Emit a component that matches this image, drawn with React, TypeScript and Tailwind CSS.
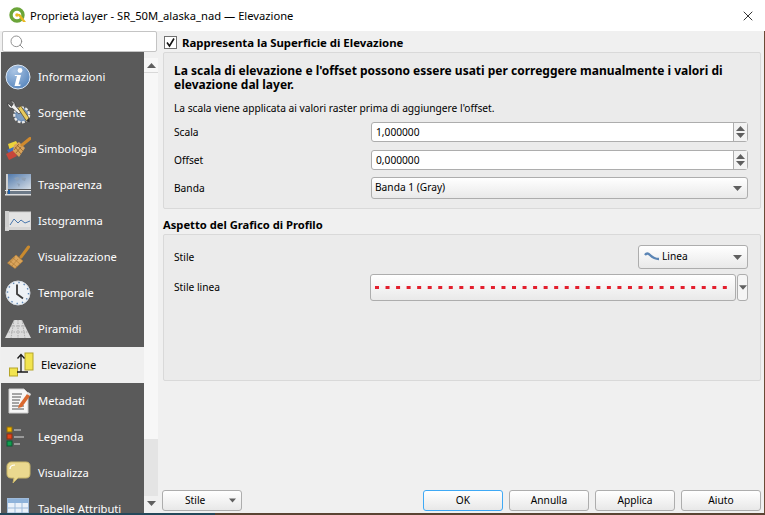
import { ReactNode } from "react";
import { Search, X } from "lucide-react";

const Caret = ({ className = "" }: { className?: string }) => (
  <svg width="9" height="5" viewBox="0 0 9 5" className={className}>
    <path d="M0 0h9L4.5 5z" fill="#5f5f5f" />
  </svg>
);

const InfoIcon = () => (
  <svg width="26" height="26" viewBox="0 0 26 26">
    <defs>
      <radialGradient id="inf" cx="0.35" cy="0.25" r="0.9">
        <stop offset="0" stopColor="#a9c4e4" />
        <stop offset="1" stopColor="#4f7fb8" />
      </radialGradient>
    </defs>
    <circle cx="13" cy="13" r="12" fill="url(#inf)" stroke="#dbe6f3" />
    <circle cx="15" cy="6.5" r="2.4" fill="#fff" />
    <path d="M10 11h6l-2.5 9.5h2.2l-.5 1.5H9.5l2.5-10H9.6z" fill="#fff" />
  </svg>
);

const SourceIcon = () => (
  <svg width="28" height="28" viewBox="0 0 28 28">
    <circle cx="18" cy="16" r="8" fill="#6f8fb5" stroke="#e8e8e8" strokeWidth="2.4" strokeDasharray="3 1.6" />
    <circle cx="18" cy="16" r="5.5" fill="#7d9cc0" />
    <path d="M3 3c0 4 2 6 5 6l7 6 2-2-6-7c0-3-2-5-5-5l3 3-2 3z" fill="#f0f0f0" stroke="#2a2a2a" strokeWidth=".7" />
    <path d="M14 9l3-2.5 9 13-3 3z" fill="#e6c95e" stroke="#5a4a20" strokeWidth=".8" />
    <path d="M23 22.5l3-3 .5 4.5z" fill="#333" />
  </svg>
);

const SymbologyIcon = () => (
  <svg width="26" height="24" viewBox="0 0 26 24">
    <path d="M3 7l8-3 3 5-9 5z" fill="#ecd33a" />
    <path d="M2 13l11-5 2 5-10 5z" fill="#3f6fc0" />
    <path d="M1 17l8-4 3 6-8 4z" fill="#c8463a" />
    <path d="M9 8l5-3 6 6-6 9-6-6z" fill="#d9a35b" />
    <path d="M17 8l8-6.5" stroke="#d08a2e" strokeWidth="3" strokeLinecap="round" />
    <path d="M10 10l6 7M12 8l6 6M9 13l5-6M11 16l5-6" stroke="#8a5c25" strokeWidth=".7" />
  </svg>
);

const TransparencyIcon = () => (
  <svg width="26" height="24" viewBox="0 0 26 24">
    <defs>
      <linearGradient id="tr" x1="0" y1="0" x2="1" y2="1">
        <stop offset="0" stopColor="#4e77aa" />
        <stop offset="1" stopColor="#d5dde6" />
      </linearGradient>
    </defs>
    <rect x="2" y="1" width="24" height="15" fill="url(#tr)" />
    <rect x="1" y="1" width="2" height="21" fill="#cfcfcf" />
    <path d="M9 5l4-1 2 2-3 2zM16 4l5 1-1 3-3-1zM12 10l3 1-1 3z" fill="#8ea0b5" />
    <rect x="0" y="17" width="26" height="1" fill="#e5e5e5" />
    <rect x="2" y="18" width="24" height="3" fill="#6d7a88" />
    <rect x="0" y="21" width="26" height="1.5" fill="#dcdcdc" />
    <rect x="3" y="17" width="2" height="4" fill="#1f5fa8" />
  </svg>
);

const HistogramIcon = () => (
  <svg width="26" height="20" viewBox="0 0 26 20">
    <rect x="1" y="1" width="25" height="16" fill="#e3e3e3" stroke="#cfcfcf" />
    <rect x="0" y="0" width="4" height="20" fill="#cfcfcf" />
    <rect x="0" y="16" width="26" height="3" fill="#d5d5d5" />
    <path d="M5 14l4-6 4 4 3-3 4 3 5-2" fill="none" stroke="#4a78ad" strokeWidth="1" />
  </svg>
);

const BrushIcon = () => (
  <svg width="24" height="26" viewBox="0 0 24 26">
    <path d="M15 13l7.5-10" stroke="#c98a2e" strokeWidth="3" strokeLinecap="round" />
    <path d="M1.5 19L10 11l7 6-8 7.5z" fill="#d9a45c" stroke="#b87f33" strokeWidth=".6" />
    <path d="M4 17l7 6M7 14l7 6M6 22l6-7M3 20l6-7" stroke="#a87633" strokeWidth=".6" />
  </svg>
);

const ClockIcon = () => (
  <svg width="26" height="26" viewBox="0 0 26 26">
    <circle cx="13" cy="13" r="12" fill="#eef2f6" stroke="#d4dbe3" />
    <circle cx="13" cy="13" r="10.5" fill="none" stroke="#5e86b5" strokeWidth="1.4" strokeDasharray="1.4 4.1" />
    <path d="M12 4.5V14l6 4.5" fill="none" stroke="#3a3a3a" strokeWidth="1.8" />
  </svg>
);

const PyramidIcon = () => (
  <svg width="26" height="20" viewBox="0 0 26 20">
    <path d="M9 1h8l9 18H0z" fill="#dcdcdc" />
    <path d="M13 1v18M6 7h14M3.5 13h19M9 1L6 19M17 1l3 18" stroke="#8a8a8a" strokeWidth=".6" strokeDasharray="1.5 1" fill="none" />
  </svg>
);

const ElevationIcon = () => (
  <svg width="26" height="26" viewBox="0 0 26 26">
    <rect x="16" y="1" width="8" height="17" fill="#f2e44f" stroke="#b5a52a" />
    <rect x="0.5" y="16" width="8" height="8" fill="#f2e44f" stroke="#b5a52a" />
    <path d="M12 20V3M8.5 6.5L12 2.5l3.5 4M8 20h11" fill="none" stroke="#1a1a1a" strokeWidth="1.3" />
  </svg>
);

const MetadataIcon = () => (
  <svg width="24" height="26" viewBox="0 0 24 26" className="translate-x-[2px]">
    <path d="M1 1h15l4 4v20H1z" fill="#f7f7f7" stroke="#cfcfcf" />
    <path d="M4 6h10M4 9h9M4 12h8M4 15h7M4 18h12M4 21h12" stroke="#555" strokeWidth="1" />
    <path d="M11 17l8-11 3 2-8 11-4 1z" fill="#d9682f" />
    <path d="M19 6l1-2 3 2-1 2z" fill="#e3e3e3" />
  </svg>
);

const LegendIcon = () => (
  <svg width="20" height="22" viewBox="0 0 20 22" className="-translate-x-[2px]">
    <rect x="1" y="1" width="5" height="5" fill="#f0b400" stroke="#8a6a10" />
    <rect x="1" y="8" width="5" height="5" fill="#e8431a" stroke="#8a3010" />
    <rect x="1" y="15" width="5" height="5" fill="#10a050" stroke="#0a5a30" />
    <path d="M8 4h7M8 11h10M8 18h6" stroke="#9a9a9a" strokeWidth="2" />
  </svg>
);

const BalloonIcon = () => (
  <svg width="25" height="24" viewBox="0 0 25 24">
    <path d="M5 1h15c3 0 4 2 4 4v8c0 3-2 4-4 4H12l-5 5 1-5H5c-3 0-4-2-4-4V5c0-2 2-4 4-4z" fill="#ead88f" stroke="#c9b669" />
    <path d="M4 8c0-3 2-4 5-4" fill="none" stroke="#fff" strokeWidth="1.2" />
  </svg>
);

const TableIcon = () => (
  <svg width="22" height="22" viewBox="0 0 22 22">
    <rect x="0.5" y="0.5" width="21" height="21" fill="#eaf1f9" stroke="#9fbbdb" />
    <rect x="1" y="1" width="20" height="4" fill="#8fb3da" />
    <path d="M1 10h20M1 15h20M8 5v16M15 5v16" stroke="#9fbbdb" />
  </svg>
);

const items: { label: string; icon: ReactNode; active?: boolean }[] = [
  { label: "Informazioni", icon: <InfoIcon /> },
  { label: "Sorgente", icon: <SourceIcon /> },
  { label: "Simbologia", icon: <SymbologyIcon /> },
  { label: "Trasparenza", icon: <TransparencyIcon /> },
  { label: "Istogramma", icon: <HistogramIcon /> },
  { label: "Visualizzazione", icon: <BrushIcon /> },
  { label: "Temporale", icon: <ClockIcon /> },
  { label: "Piramidi", icon: <PyramidIcon /> },
  { label: "Elevazione", icon: <ElevationIcon />, active: true },
  { label: "Metadati", icon: <MetadataIcon /> },
  { label: "Legenda", icon: <LegendIcon /> },
  { label: "Visualizza", icon: <BalloonIcon /> },
  { label: "Tabelle Attributi", icon: <TableIcon /> },
];

function Spin({ value }: { value: string }) {
  return (
    <div className="flex h-[20px] w-[377px] rounded-[3px] border border-[#adadad] bg-white">
      <div className="flex-1 pl-[4px] leading-[18px]">{value}</div>
      <div className="flex w-[14px] flex-col items-center justify-center gap-[2px] border-l border-[#adadad] bg-[#f3f3f3]">
        <Caret className="rotate-180" />
        <Caret />
      </div>
    </div>
  );
}

function Row({ label, children }: { label: string; children: ReactNode }) {
  return (
    <div className="flex h-[28px] items-center">
      <div className="w-[197px] pt-[1px]">{label}</div>
      {children}
    </div>
  );
}

function Button({ label, focus }: { label: string; focus?: boolean }) {
  return (
    <button
      className={
        "h-[21px] w-[80px] rounded-[3px] border bg-gradient-to-b from-white to-[#e8e8e8] text-center leading-[19px] " +
        (focus ? "border-[#3fa9f5]" : "border-[#adadad]")
      }
    >
      {label}
    </button>
  );
}

export default function App() {
  return (
    <div className="flex h-[515px] w-[765px] flex-col overflow-hidden bg-[#f0f0f0] font-['Noto_Sans',sans-serif] text-[10.2px] text-black">
      <div className="flex h-[31px] items-center bg-white pl-[9px] pr-[9px] text-[11.2px]">
        <svg width="17" height="17" viewBox="0 0 17 17">
          <circle cx="8" cy="8" r="6" fill="none" stroke="#6ba539" strokeWidth="3.4" />
          <path d="M8 7l6 8h3l-6-8z" fill="#e8b923" />
          <circle cx="8" cy="8" r="1.8" fill="#e8b923" />
        </svg>
        <span className="ml-[4px] flex-1 pt-[1px]">Proprietà layer - SR_50M_alaska_nad — Elevazione</span>
        <X size={16} strokeWidth={1.2} />
      </div>

      <div className="flex min-h-0 flex-1">
        <div className="flex w-[158px] flex-col pl-[1px]">
          <div className="ml-[1px] mr-[1px] flex h-[21px] items-center rounded-[2px] border border-[#c4c4c4] bg-white pl-[6px]">
            <Search size={16} strokeWidth={1.4} className="text-[#8a8a8a]" />
          </div>
          <div className="flex min-h-0 flex-1">
            <div className="min-h-0 w-[143px] overflow-hidden bg-[#5a5a5a] pt-[7px] text-[11.2px]">
              {items.map((item) => (
                <div
                  key={item.label}
                  className={
                    "flex h-[36px] items-center " +
                    (item.active ? "bg-[#efefef] pl-[8px] text-black" : "pl-[4px] text-white")
                  }
                >
                  <div className="flex w-[26px] shrink-0 justify-center">{item.icon}</div>
                  <span className={item.active ? "ml-[6px] pt-[1px]" : "ml-[7px] pt-[1px]"}>{item.label}</span>
                </div>
              ))}
            </div>
            <div className="mb-[2px] mt-[6px] flex w-[14px] flex-col">
              <div className="flex h-[15px] items-center justify-center border-b border-[#d8d8d8] bg-[#f7f7f7]">
                <Caret className="rotate-180" />
              </div>
              <div className="h-[366px] bg-[#f7f7f7]" />
              <div className="flex-1 bg-[#e4e4e4]" />
              <div className="flex h-[15px] items-center justify-center bg-[#f0f0f0]">
                <Caret />
              </div>
            </div>
          </div>
        </div>

        <div className="flex min-w-0 flex-1 flex-col pl-[5px] pr-[3px]">
          <label className="flex h-[21px] items-center pl-[1px] pt-[2px] text-[11.4px] font-bold">
            <span className="mr-[5px] flex h-[13px] w-[13px] items-center justify-center border border-[#707070] bg-white">
              <svg width="11" height="11" viewBox="0 0 11 11">
                <path d="M2 5.5L4.5 9 9 1.5" fill="none" stroke="#111" strokeWidth="1.6" />
              </svg>
            </span>
            Rappresenta la Superficie di Elevazione
          </label>

          <div className="h-[157px] rounded-[2px] border border-[#d9d9d9] bg-[#ebebeb] pl-[10px] pr-[12px] pt-[11px]">
            <p className="text-[12px] font-bold leading-[14px]">
              La scala di elevazione e l&apos;offset possono essere usati per correggere manualmente i valori di elevazione dal layer.
            </p>
            <p className="mt-[8px] leading-[16px]">La scala viene applicata ai valori raster prima di aggiungere l&apos;offset.</p>
            <div className="mt-[2px]">
              <Row label="Scala">
                <Spin value="1,000000" />
              </Row>
              <Row label="Offset">
                <Spin value="0,000000" />
              </Row>
              <Row label="Banda">
                <div className="flex h-[22px] w-[377px] items-center justify-between rounded-[3px] border border-[#adadad] bg-gradient-to-b from-white to-[#e9e9e9] pl-[3px] pr-[5px]">
                  <span>Banda 1 (Gray)</span>
                  <Caret />
                </div>
              </Row>
            </div>
          </div>

          <div className="mt-[8px] h-[16px] text-[11.2px] font-bold leading-[16px]">Aspetto del Grafico di Profilo</div>

          <div className="mt-[1px] h-[147px] rounded-[2px] border border-[#d9d9d9] bg-[#ebebeb] pl-[10px] pr-[12px] pt-[9px]">
            <div className="flex h-[26px] items-center justify-between">
              <span className="pt-[2px]">Stile</span>
              <div className="flex h-[24px] w-[110px] items-center justify-between rounded-[3px] border border-[#adadad] bg-gradient-to-b from-white to-[#e9e9e9] pl-[5px] pr-[5px]">
                <span className="flex items-center">
                  <svg width="17" height="10" viewBox="0 0 17 10">
                    <path d="M1 3c1.5-2 3-2 5 0s5 4 9 4" fill="none" stroke="#5b85b5" strokeWidth="2.4" />
                  </svg>
                  <span className="ml-[1px]">Linea</span>
                </span>
                <Caret />
              </div>
            </div>
            <div className="mt-[3px] flex h-[28px] items-center">
              <span className="w-[196px] pt-[2px]">Stile linea</span>
              <div className="flex h-[27px] w-[366px] items-center rounded-[3px] border border-[#adadad] bg-gradient-to-b from-white to-[#e9e9e9] px-[4px]">
                <svg width="352" height="3" viewBox="0 0 352 3">
                  <line x1="0" y1="1.5" x2="352" y2="1.5" stroke="#e3202e" strokeWidth="3" strokeDasharray="4 6.54" />
                </svg>
              </div>
              <div className="ml-[1px] flex h-[27px] w-[11px] items-center justify-center rounded-[3px] border border-[#adadad] bg-[#f5f5f5]">
                <Caret className="w-[8px]" />
              </div>
            </div>
          </div>

          <div className="flex flex-1 items-end pb-[2px]">
            <div className="flex w-full items-center justify-between">
              <button className="-ml-[1px] flex h-[21px] w-[80px] items-center justify-between rounded-[3px] border border-[#adadad] bg-gradient-to-b from-white to-[#e8e8e8] pl-[22px] pr-[5px]">
                <span>Stile</span>
                <Caret className="w-[7px]" />
              </button>
              <div className="flex gap-[6px]">
                <Button label="OK" focus />
                <Button label="Annulla" />
                <Button label="Applica" />
                <Button label="Aiuto" />
              </div>
            </div>
          </div>
        </div>
        <div className="w-[1px] bg-[#6b4a35]" />
      </div>
      <div className="flex h-[2px]">
        <div className="w-[215px] bg-[#24485a]" />
        <div className="flex-1 bg-[#5a4433]" />
      </div>
    </div>
  );
}
